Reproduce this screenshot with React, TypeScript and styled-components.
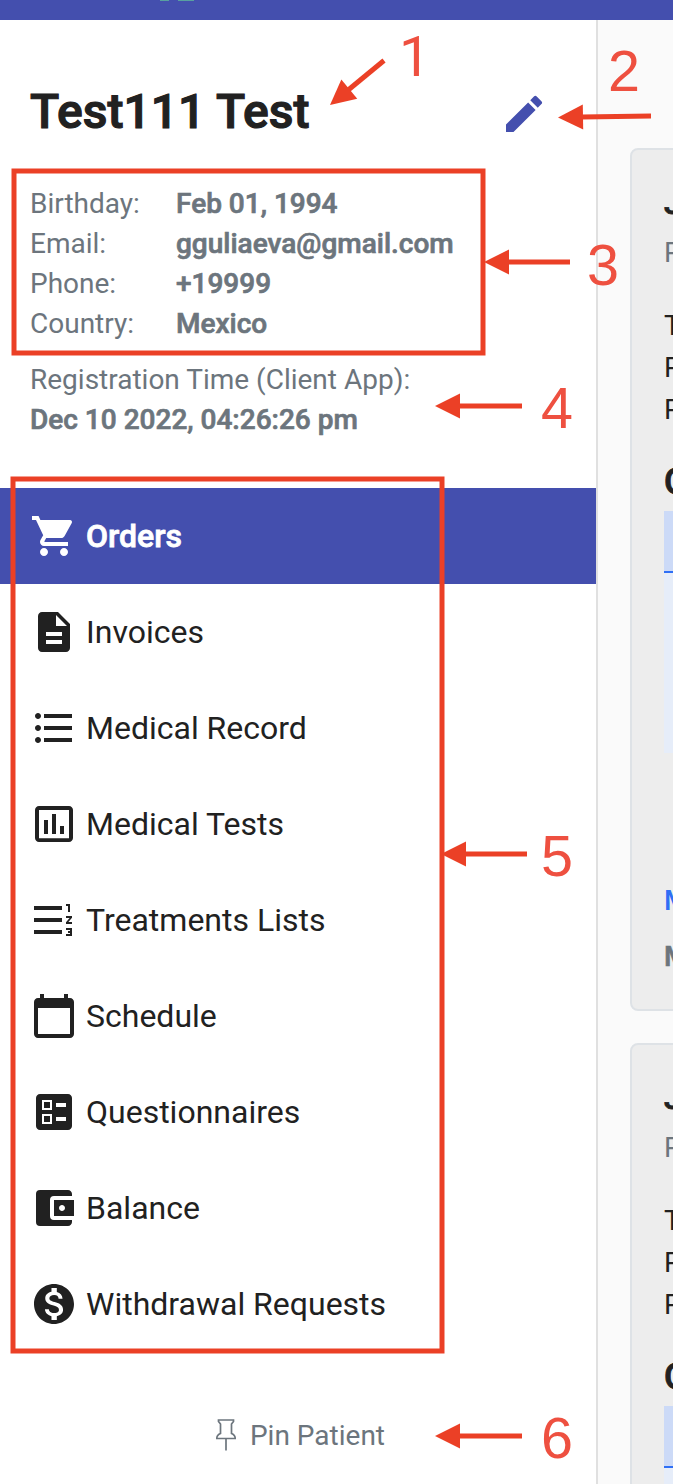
import React from "react";
import styled, { createGlobalStyle, css } from "styled-components";
import type { IconType } from "react-icons";
import {
  MdShoppingCart,
  MdDescription,
  MdFormatListBulleted,
  MdInsertChartOutlined,
  MdFormatListNumberedRtl,
  MdCalendarToday,
  MdBallot,
  MdAccountBalanceWallet,
  MdMonetizationOn,
  MdEdit,
} from "react-icons/md";

const colors = {
  primary: "#444fae",
  text: "#212121",
  muted: "#6c757d",
  mark: "#eb4026",
  markText: "#ee5040",
};

// Medium face thickened by a stroke, as a synthesised bold looks.
const strong = css`
  font-weight: 500;
  -webkit-text-stroke: 0.024em currentColor;
`;

const GlobalStyle = createGlobalStyle`
  * { box-sizing: border-box; }
  body { margin: 0; background: #fff; font-family: Roboto, sans-serif; color: ${colors.text}; }
`;

const Page = styled.div`
  position: relative;
  display: flex;
  flex-direction: column;
  width: 673px;
  height: 1484px;
  overflow: hidden;
`;

const TopBar = styled.header`
  flex: none;
  display: flex;
  gap: 9px;
  height: 20px;
  padding-left: 160px;
  background: ${colors.primary};
`;

const LogoEdge = styled.span<{ $width: number }>`
  width: ${(p) => p.$width}px;
  height: 1px;
  background: #58a0a0;
`;

const Columns = styled.div`
  flex: 1;
  display: flex;
  min-height: 0;
`;

const Sidebar = styled.aside`
  flex: none;
  display: flex;
  flex-direction: column;
  width: 598px;
  background: #fff;
  border-right: 2px solid #e0e0e0;
`;

const NameRow = styled.div`
  display: flex;
  align-items: center;
  justify-content: space-between;
  height: 56px;
  margin-top: 64px;
  padding: 0 48px 0 30px;
`;

const Name = styled.h1`
  margin: 0;
  font-size: 48px;
  line-height: 56px;
  ${strong}
`;

const EditIcon = styled(MdEdit)`
  width: 48px;
  height: 48px;
  margin-top: 4px;
  color: ${colors.primary};
`;

const Details = styled.dl`
  display: grid;
  grid-template-columns: 146px 1fr;
  grid-auto-rows: 40px;
  margin: 44px 0 0;
  padding-left: 30px;
  font-size: 28px;
  line-height: 40px;
  color: ${colors.muted};
`;

const Label = styled.dt``;

const Value = styled.dd`
  margin: 0;
  ${strong}
`;

const Registration = styled.div`
  margin: 16px 0 48px;
  padding-left: 30px;
  font-size: 28px;
  line-height: 40px;
  color: ${colors.muted};
`;

const RegistrationTime = styled.div`
  ${strong}
`;

const Nav = styled.nav`
  display: flex;
  flex-direction: column;
`;

const NavItem = styled.a<{ $active?: boolean }>`
  display: flex;
  align-items: center;
  gap: 8px;
  height: 96px;
  padding-left: 30px;
  font-size: 32px;
  white-space: nowrap;

  svg {
    width: 48px;
    height: 48px;
  }

  ${(p) =>
    p.$active &&
    css`
      background: ${colors.primary};
      color: #fff;
      ${strong}
    `}
`;

const PinButton = styled.div`
  display: flex;
  align-items: center;
  justify-content: center;
  gap: 14px;
  height: 40px;
  margin-top: 63px;
  padding-left: 5px;
  font-size: 28px;
  color: ${colors.muted};
`;

const Content = styled.main`
  flex: 1;
  display: flex;
  flex-direction: column;
  gap: 32px;
  min-width: 0;
  padding: 128px 0 0 32px;
  background: #fafafa;
  overflow: hidden;
`;

const Card = styled.section`
  flex: none;
  width: 400px;
  height: 863px;
  padding: 30px 32px;
  border: 2px solid #dee2e6;
  border-radius: 8px;
  background: #ededed;
  font-size: 28px;
`;

const CardTitle = styled.div`
  height: 52px;
  font-size: 32px;
  line-height: 46px;
  ${strong}
`;

const CardSub = styled.div`
  height: 42px;
  line-height: 42px;
  color: ${colors.muted};
`;

const CardLines = styled.div`
  margin: 31px 0 28px;
  line-height: 42px;
`;

const SectionTitle = styled.div`
  height: 52px;
  font-size: 36px;
  line-height: 47px;
  ${strong}
`;

const TableHead = styled.div`
  height: 62px;
  border-bottom: 2px solid #2f6ff5;
  background: #ccdaf7;
`;

const TableBody = styled.div`
  height: 180px;
  background: #e6edf9;
`;

const CardLink = styled.div`
  margin-top: 127px;
  line-height: 42px;
  color: #2f6ff5;
  font-weight: 500;
`;

const CardNote = styled.div`
  margin-top: 14px;
  line-height: 42px;
  color: ${colors.muted};
  ${strong}
`;

const Marks = styled.svg`
  position: absolute;
  top: 0;
  left: 0;
  pointer-events: none;
`;

const MarkNumber = styled.text<{ $plain?: boolean }>`
  font-family: ${(p) => (p.$plain ? "Roboto, sans-serif" : '"Liberation Sans", Arial, sans-serif')};
  font-size: ${(p) => (p.$plain ? 56 : 57.5)}px;
  fill: ${colors.markText};
`;

const PinIcon = () => (
  <svg width="20" height="32" viewBox="0 0 20 32" fill="none" stroke="currentColor" strokeWidth="1.7">
    <path d="M2.5 1h15v1.5L15.5 5v9.5c2.3.9 3.7 2.5 3.7 5H.8c0-2.5 1.4-4.1 3.7-5V5L2.5 2.5z" />
    <path d="M10 19.5V31.5" />
  </svg>
);

const details = [
  ["Birthday:", "Feb 01, 1994"],
  ["Email:", "gguliaeva@gmail.com"],
  ["Phone:", "+19999"],
  ["Country:", "Mexico"],
];

const navItems: { label: string; icon: IconType }[] = [
  { label: "Orders", icon: MdShoppingCart },
  { label: "Invoices", icon: MdDescription },
  { label: "Medical Record", icon: MdFormatListBulleted },
  { label: "Medical Tests", icon: MdInsertChartOutlined },
  { label: "Treatments Lists", icon: MdFormatListNumberedRtl },
  { label: "Schedule", icon: MdCalendarToday },
  { label: "Questionnaires", icon: MdBallot },
  { label: "Balance", icon: MdAccountBalanceWallet },
  { label: "Withdrawal Requests", icon: MdMonetizationOn },
];

// Arrow tip, tail, and the baseline position of the number beside it.
const marks = [
  { n: 1, tip: [330, 105], tail: [384, 60.5], text: [399, 76] },
  { n: 2, tip: [558, 117.5], tail: [651, 116], text: [608, 91] },
  { n: 3, tip: [484, 262], tail: [570, 262], text: [587, 284.5] },
  { n: 4, tip: [435, 406], tail: [522, 406], text: [541, 428] },
  { n: 5, tip: [441, 854], tail: [527, 854], text: [541, 876] },
  { n: 6, tip: [435, 1436], tail: [522, 1436], text: [541, 1458] },
];

const Arrow = ({ tip, tail }: { tip: number[]; tail: number[] }) => {
  const dx = tail[0] - tip[0];
  const dy = tail[1] - tip[1];
  const length = Math.hypot(dx, dy);
  const angle = (Math.atan2(dy, dx) * 180) / Math.PI;
  return (
    <g transform={`translate(${tip[0]} ${tip[1]}) rotate(${angle})`} fill={colors.mark}>
      <path d="M0 0L25 -12.5V12.5z" />
      <rect x="24" y="-2.5" width={length - 24} height="5" />
    </g>
  );
};

const OrderCard = () => (
  <Card>
    <CardTitle>J</CardTitle>
    <CardSub>P</CardSub>
    <CardLines>
      <div>T</div>
      <div>P</div>
      <div>P</div>
    </CardLines>
    <SectionTitle>O</SectionTitle>
    <TableHead />
    <TableBody />
    <CardLink>M</CardLink>
    <CardNote>M</CardNote>
  </Card>
);

export default function App() {
  return (
    <Page>
      <GlobalStyle />
      <TopBar>
        <LogoEdge $width={9} />
        <LogoEdge $width={16} />
      </TopBar>
      <Columns>
        <Sidebar>
          <NameRow>
            <Name>Test111 Test</Name>
            <EditIcon />
          </NameRow>
          <Details>
            {details.map(([label, value]) => (
              <React.Fragment key={label}>
                <Label>{label}</Label>
                <Value>{value}</Value>
              </React.Fragment>
            ))}
          </Details>
          <Registration>
            Registration Time (Client App):
            <RegistrationTime>Dec 10 2022, 04:26:26 pm</RegistrationTime>
          </Registration>
          <Nav>
            {navItems.map(({ label, icon: Icon }, i) => (
              <NavItem key={label} $active={i === 0}>
                <Icon />
                {label}
              </NavItem>
            ))}
          </Nav>
          <PinButton>
            <PinIcon />
            Pin Patient
          </PinButton>
        </Sidebar>
        <Content>
          <OrderCard />
          <OrderCard />
        </Content>
      </Columns>
      <Marks width="673" height="1484" viewBox="0 0 673 1484">
        <g fill="none" stroke={colors.mark} strokeWidth="5">
          <rect x="14" y="171" width="469" height="182" />
          <rect x="13" y="479" width="429" height="872" />
        </g>
        {marks.map((m) => (
          <g key={m.n}>
            <Arrow tip={m.tip} tail={m.tail} />
            <MarkNumber x={m.text[0]} y={m.text[1]} $plain={m.n === 1}>
              {m.n}
            </MarkNumber>
          </g>
        ))}
      </Marks>
    </Page>
  );
}
